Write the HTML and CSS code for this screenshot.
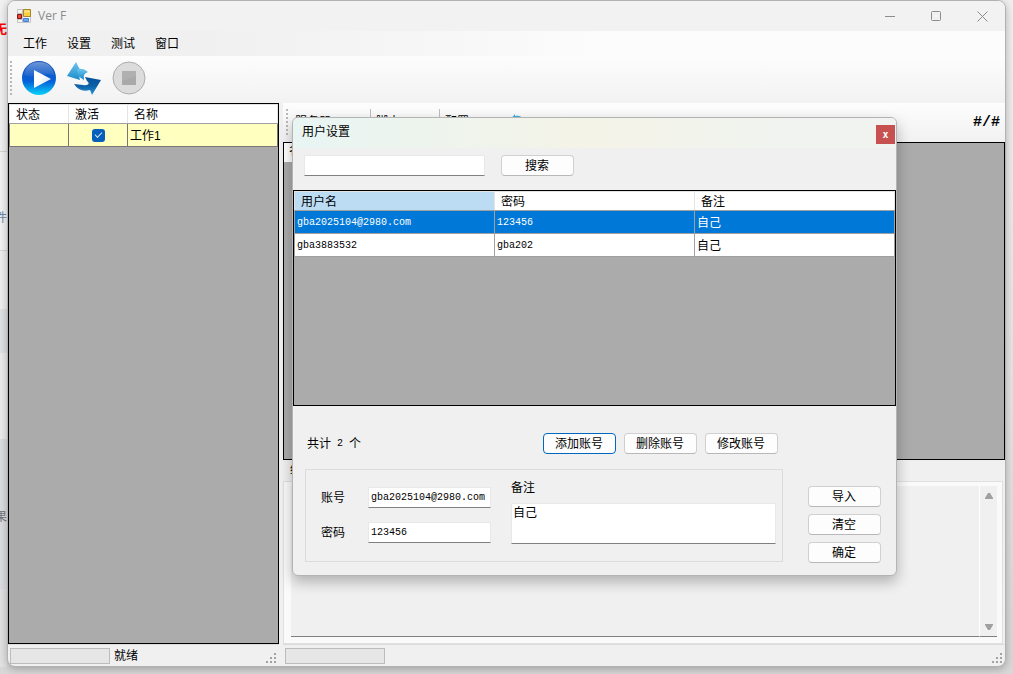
FILE: index.html
```html
<!DOCTYPE html>
<html lang="zh-CN">
<head>
<meta charset="utf-8">
<title>Ver F</title>
<link rel="stylesheet" href="styles.css">
</head>
<body>
<div class="desktop">
  <aside class="backdrop" aria-hidden="true">
    <span class="back-cell back-top">无</span>
    <span class="back-cell back-mid">件</span>
    <span class="back-cell back-band"></span>
    <span class="back-cell back-gap"></span>
    <span class="back-cell back-low">果</span>
  </aside>
  <div class="window">
    <header class="titlebar">
      <svg class="app-icon" width="14" height="14" viewBox="0 0 14 14">
        <path d="M.5.5h13v13H.5zM5.500.5v13M.5 4.500h5M.5 10.500h5" fill="#f4f4f4" stroke="#c4c4c4"/>
        <path d="M6.500.5h7v7h-7z" fill="#f8cf3c" stroke="#a8862c"/>
        <path d="M.5 5.500h4v4h-4z" fill="#e8443a" stroke="#8a1510"/>
        <path d="M6.500 9.500h5v3h-5z" fill="#6aaaf5" stroke="#4a80d4"/>
        <path d="M7.500 1.500h5v2h-5z" fill="#fbe58c"/>
      </svg>
      <span class="app-title">Ver F</span>
      <button class="caption" aria-label="最小化"><svg width="11" height="11" viewBox="0 0 11 11"><path d="M0 5.500h10"/></svg></button>
      <button class="caption" aria-label="最大化"><svg width="11" height="11" viewBox="0 0 11 11"><rect x=".5" y=".5" width="9" height="9" rx="1"/></svg></button>
      <button class="caption" aria-label="关闭"><svg width="11" height="11" viewBox="0 0 11 11"><path d="M.5.5l10 10M10.500.5l-10 10"/></svg></button>
    </header>
    <nav class="menubar">
      <button>工作</button><button>设置</button><button>测试</button><button>窗口</button>
    </nav>
    <div class="toolbar">
      <span class="grip"></span>
      <button aria-label="开始">
        <svg width="36" height="36" viewBox="0 0 36 36">
          <defs>
            <linearGradient id="ball" x1="0" y1="0" x2="0" y2="1"><stop offset="0" stop-color="#1a50b0"/><stop offset=".6" stop-color="#0560d8"/><stop offset="1" stop-color="#08d4fa"/></linearGradient>
            <linearGradient id="shine" x1="0" y1="0" x2="0" y2="1"><stop offset="0" stop-color="#a4c2ee"/><stop offset="1" stop-color="#2467cc"/></linearGradient>
            <linearGradient id="tri" x1="0" y1="0" x2="1" y2="1"><stop offset=".4" stop-color="#fff"/><stop offset="1" stop-color="#c4d8ef"/></linearGradient>
          </defs>
          <circle cx="18" cy="18" r="17" fill="url(#ball)"/>
          <path d="M3 15C4 6 10 2 18 2s14 4 15 13C24 12 12 19 3 15z" fill="url(#shine)" opacity=".6"/>
          <path d="M13 10v18l17-9z" fill="url(#tri)"/>
        </svg>
      </button>
      <button aria-label="刷新">
        <svg width="36" height="36" viewBox="0 0 36 36">
          <defs>
            <linearGradient id="up" x1="0" y1="0" x2="0" y2="1"><stop offset="0" stop-color="#6ec5ee"/><stop offset="1" stop-color="#1688c8"/></linearGradient>
            <linearGradient id="down" x1="0" y1="0" x2="0" y2="1"><stop offset="0" stop-color="#06509a"/><stop offset=".5" stop-color="#0c60a8"/><stop offset="1" stop-color="#2a9ad8"/></linearGradient>
          </defs>
          <path d="M10 2L1 16l13 4-1-4c3 0 4 2 5 5-1-5 0-8 4-9-3 0-6 0-9-4z" fill="url(#up)"/>
          <path d="M11 9c4-1 8 0 11 3-4 0-5 3-4 8l-6-4z" fill="url(#up)"/>
          <path d="M35 20l-16-3 2 4c3 2 2 5-4 4l-9-1c4 6 9 8 16 6l2 5z" fill="url(#down)"/>
        </svg>
      </button>
      <button aria-label="停止">
        <svg width="36" height="36" viewBox="0 0 36 36">
          <circle cx="18" cy="18" r="16" fill="#dcdcdc" stroke="#adadad"/>
          <path d="M11 11h14v14H11z" fill="#a9a9a9"/><path d="M11 11h14v5l-14 5z" fill="#b0b0b0"/>
        </svg>
      </button>
    </div>
    <div class="workspace">
      <section class="jobs">
        <div class="grid-area">
          <table class="jobs-table">
            <colgroup><col class="col-state"><col class="col-active"><col></colgroup>
            <thead><tr><th>状态</th><th>激活</th><th>名称</th></tr></thead>
            <tbody><tr><td></td><td class="tick"><input type="checkbox" checked aria-label="激活"></td><td>工作1</td></tr></tbody>
          </table>
        </div>
        <footer class="statusbar"><span class="progress"></span><span>就绪</span><svg class="sizer" width="11" height="11" viewBox="0 0 11 11"><path d="M8 0h2v2H8zM4 4h2v2H4zM8 4h2v2H8zM0 8h2v2H0zM4 8h2v2H4zM8 8h2v2H8z"/></svg></footer>
      </section>
      <section class="details">
        <div class="strip">
          <span class="grip"></span>
          <span class="strip-item strip-first">服务器 #</span>
          <span class="strip-item">脚本 #</span>
          <span class="strip-item strip-last">配置 #</span>
          <svg width="18" height="20" viewBox="0 0 18 20"><path d="M1 7l5-6v2c4-1 6 0 8 3-5-1-7 0-7 2L6 8v3z" fill="#3fb0e4"/></svg>
          <strong class="counter">#/#</strong>
        </div>
        <div class="grid-area wide"><span class="stub">名</span></div>
        <label class="result-label" for="log">结果</label>
        <div class="result">
          <textarea id="log" readonly></textarea>
          <div class="scroll">
            <svg width="10" height="8" viewBox="0 0 10 8"><path d="M1 6l3-5h2l3 5v1H1z"/></svg>
            <svg width="10" height="8" viewBox="0 0 10 8"><path d="M1 2l3 5h2l3-5V1H1z"/></svg>
          </div>
        </div>
        <footer class="statusbar"><span class="progress"></span><svg class="sizer" width="11" height="11" viewBox="0 0 11 11"><path d="M8 0h2v2H8zM4 4h2v2H4zM8 4h2v2H8zM0 8h2v2H0zM4 8h2v2H4zM8 8h2v2H8z"/></svg></footer>
      </section>
    </div>
  </div>
</div>
<div class="dialog" role="dialog" aria-label="用户设置">
  <header class="dialog-title"><span>用户设置</span><button class="dialog-close" aria-label="关闭">x</button></header>
  <div class="search"><input class="field" type="text" aria-label="搜索"><button class="btn">搜索</button></div>
  <div class="grid-area users">
    <table class="users-table">
      <thead><tr><th class="sorted">用户名</th><th>密码</th><th>备注</th></tr></thead>
      <tbody>
        <tr class="selected"><td class="mono">gba2025104@2980.com</td><td class="mono">123456</td><td>自己</td></tr>
        <tr><td class="mono">gba3883532</td><td class="mono">gba202</td><td>自己</td></tr>
      </tbody>
    </table>
  </div>
  <div class="actions">
    <span class="total"><span>共计</span><span class="mono">2</span><span>个</span></span>
    <button class="btn primary">添加账号</button><button class="btn">删除账号</button><button class="btn">修改账号</button>
  </div>
  <div class="bottom">
    <div class="group">
      <div class="pairs">
        <label for="acc">账号</label><input id="acc" class="field mono" type="text" value="gba2025104@2980.com">
        <label for="pwd">密码</label><input id="pwd" class="field mono" type="text" value="123456">
      </div>
      <div class="note"><label for="note">备注</label><textarea id="note" class="field">自己</textarea></div>
    </div>
    <div class="side"><button class="btn">导入</button><button class="btn">清空</button><button class="btn">确定</button></div>
  </div>
</div>
</body>
</html>
```
FILE: styles.css
```css
* { box-sizing: border-box; }
body {
  margin: 0;
  font: 12px/16px "Liberation Sans", "Noto Sans CJK SC", sans-serif;
  color: #000;
}
button, input, textarea { font: inherit; color: inherit; margin: 0; padding: 0; border: 0; background: none; }
.mono { font-family: "Liberation Mono", monospace; font-size: 10px; }

.desktop {
  display: flex;
  height: 100vh;
  padding: 0 7px 7px 0;
  overflow: hidden;
  background: linear-gradient(#f0f0f0, #e4e4e4 60%, #d8d8d8);
}
.backdrop { width: 7px; flex: none; display: flex; flex-direction: column; color: #75757c; }
.back-cell { display: flex; align-items: center; justify-content: flex-end; overflow: hidden; border-bottom: 1px solid #d6d6d6; }
.back-top { height: 152px; padding-bottom: 92px; color: #f00; font-weight: bold; background: #f1f1f1; }
.back-mid { height: 99px; padding-top: 34px; color: #6a86a8; background: #f3f3f3; }
.back-band { height: 102px; background: linear-gradient(#efefef 58px, #e0e2e6 58px); border: 0; }
.back-gap { height: 86px; background: #ececec; border: 0; }
.back-low { flex: 1; padding-bottom: 72px; background: linear-gradient(#dcdee2 150px, #e2e2e2 150px); border: 0; }

.window {
  flex: 1;
  min-width: 0;
  display: flex;
  flex-direction: column;
  border: 1px solid #b2b2b2;
  border-radius: 8px;
  overflow: hidden;
  background: #f0f0f0;
  box-shadow: 0 2px 8px #0004;
}
.titlebar { display: flex; align-items: center; height: 30px; flex: none; padding-left: 9px; background: #f2f2f2; }
.app-title { flex: 1; margin-left: 7px; color: #8a8a8a; font-family: "Open Sans", sans-serif; }
.caption { width: 46px; height: 28px; display: grid; place-items: center; }
.caption svg { fill: none; stroke: #8c8c8c; }
.menubar { display: flex; gap: 20px; height: 25px; flex: none; padding-left: 15px; background: linear-gradient(90deg, #f0f0f0 20%, #fcfcfc 60%); }
.toolbar { display: flex; align-items: center; height: 47px; flex: none; gap: 9px; padding: 0 0 3px 2px; background: linear-gradient(#fdfdfd, #f2f2f2); }
.toolbar button, .toolbar svg { display: block; }
.grip { width: 2px; height: 34px; flex: none; background: repeating-linear-gradient(#b8b8b8 0 2px, transparent 2px 4px); }

.workspace { flex: 1; min-height: 0; display: flex; gap: 4px; }
.jobs { width: 271px; flex: none; display: flex; flex-direction: column; }
.details { flex: 1; min-width: 0; display: flex; flex-direction: column; }
.grid-area { border: 1px solid #000; background: #ababab; flex: 1; min-height: 0; }
table { width: 100%; border-collapse: collapse; table-layout: fixed; }
th { font-weight: normal; text-align: left; line-height: 15px; background: #fff; height: 19px; padding: 2px 0 0 6px; border: 1px solid #e4e4e4; border-bottom-color: #a0a0a0; }
td { height: 23px; padding: 2px 2px 0; border: 1px solid #a0a0a0; background: #fff; white-space: nowrap; }
.jobs-table td { background: #ffffc0; border-color: #777; }
.col-state, .col-active { width: 59px; }
.jobs-table .tick { text-align: center; line-height: 1px; padding: 0; }
.tick input { appearance: none; width: 13px; height: 13px; border-radius: 3px; vertical-align: middle; background: #0560bb; display: inline-grid; place-items: center; }
.tick input::after { content: ""; width: 6px; height: 3px; border: solid #cfe2f6; border-width: 0 0 1px 1px; transform: rotate(-45deg); margin-bottom: 2px; }
.statusbar { display: flex; align-items: center; gap: 4px; height: 22px; flex: none; padding: 1px 2px 0; border-top: 1px solid #dcdcdc; }
.progress { width: 100px; height: 16px; border: 1px solid #bcbcbc; background: #e6e6e6; }
.sizer { margin: 5px 0 0 auto; fill: #a2a2a2; }

.strip { display: flex; align-items: center; height: 39px; flex: none; padding: 0 5px 0 3px; background: linear-gradient(#fdfdfd, #f1f1f1); }
.strip .grip { height: 28px; margin-right: 7px; }
.strip-item { width: 64px; height: 28px; line-height: 26px; margin-right: 5px; border-right: 1px solid #bdbdbd; }
.strip-first { width: 76px; }
.strip-last { border: 0; margin-right: 0; }
.counter { margin-left: auto; font: bold 15px/20px "Liberation Mono", monospace; }
.stub { display: block; width: 20px; height: 19px; padding-left: 5px; background: #fff; border-right: 1px solid #ddd; }
.result-label { height: 21px; flex: none; padding: 2px 0 0 7px; }
.result { display: flex; height: 163px; flex: none; padding: 4px 5px 6px 7px; margin-right: 2px; background: #fafafa; border: 1px solid #e0e0e0; }
.result textarea { flex: 1; min-width: 0; resize: none; background: #f0f0f0; border-bottom: 1px solid #808080; }
.scroll { width: 18px; display: flex; flex-direction: column; justify-content: space-between; align-items: center; padding: 6px 0 5px; background: #f0f0f0; border-left: 1px solid #fff; border-bottom: 1px solid #808080; }
.scroll svg { fill: #a0a0a0; }

.dialog {
  position: absolute;
  left: 292px;
  top: 117px;
  width: 605px;
  border: 1px solid #b4b4b4;
  border-radius: 6px;
  overflow: hidden;
  background: #f0f0f0;
  box-shadow: 0 6px 14px #0004;
}
.dialog-title { display: flex; justify-content: space-between; height: 30px; padding: 6px 1px 0 9px; background: linear-gradient(90deg, #e8f5f3, #f4f3e7 48%, #f0f3f0 85%); }
.dialog-close { width: 19px; height: 19px; margin-top: 1px; background: #c75050; color: #fff; font: bold 10px/16px "DejaVu Sans Mono", monospace; }
.search { display: flex; align-items: center; gap: 16px; height: 42px; padding: 0 0 8px 11px; }
.field { background: #fff; border: 1px solid #e8e8e8; border-bottom-color: #808080; padding: 0 2px; }
.search .field { width: 181px; height: 21px; }
.btn { width: 73px; height: 21px; flex: none; line-height: 16px; padding: 1px 1px 0 0; background: #fdfdfd; border: 1px solid #d0d0d0; border-bottom-color: #b8b8b8; border-radius: 4px; }
.btn.primary { border-color: #0067c0; }
.users { height: 216px; }
.users-table th.sorted { background: #bcdcf4; }
.selected td { background: #0078d7; color: #fff; }
.actions { display: flex; gap: 8px; padding: 27px 118px 0 14px; }
.total { flex: 1; display: flex; gap: 6px; line-height: 22px; }
.bottom { display: flex; gap: 25px; padding: 14px 0 13px 12px; }
.group { width: 478px; height: 93px; flex: none; display: flex; gap: 20px; padding: 10px 6px 0 15px; border: 1px solid #dcdcdc; }
.pairs { display: grid; grid-template-columns: 47px 123px; grid-template-rows: 21px 21px; row-gap: 14px; padding-top: 7px; align-items: center; }
.pairs .field { height: 21px; }
.note { flex: 1; display: flex; flex-direction: column; gap: 7px; }
.note .field { width: 100%; height: 41px; resize: none; overflow: hidden; padding: 1px; }
.side { display: flex; flex-direction: column; justify-content: center; gap: 7px; height: 93px; padding-top: 18px; }
```
